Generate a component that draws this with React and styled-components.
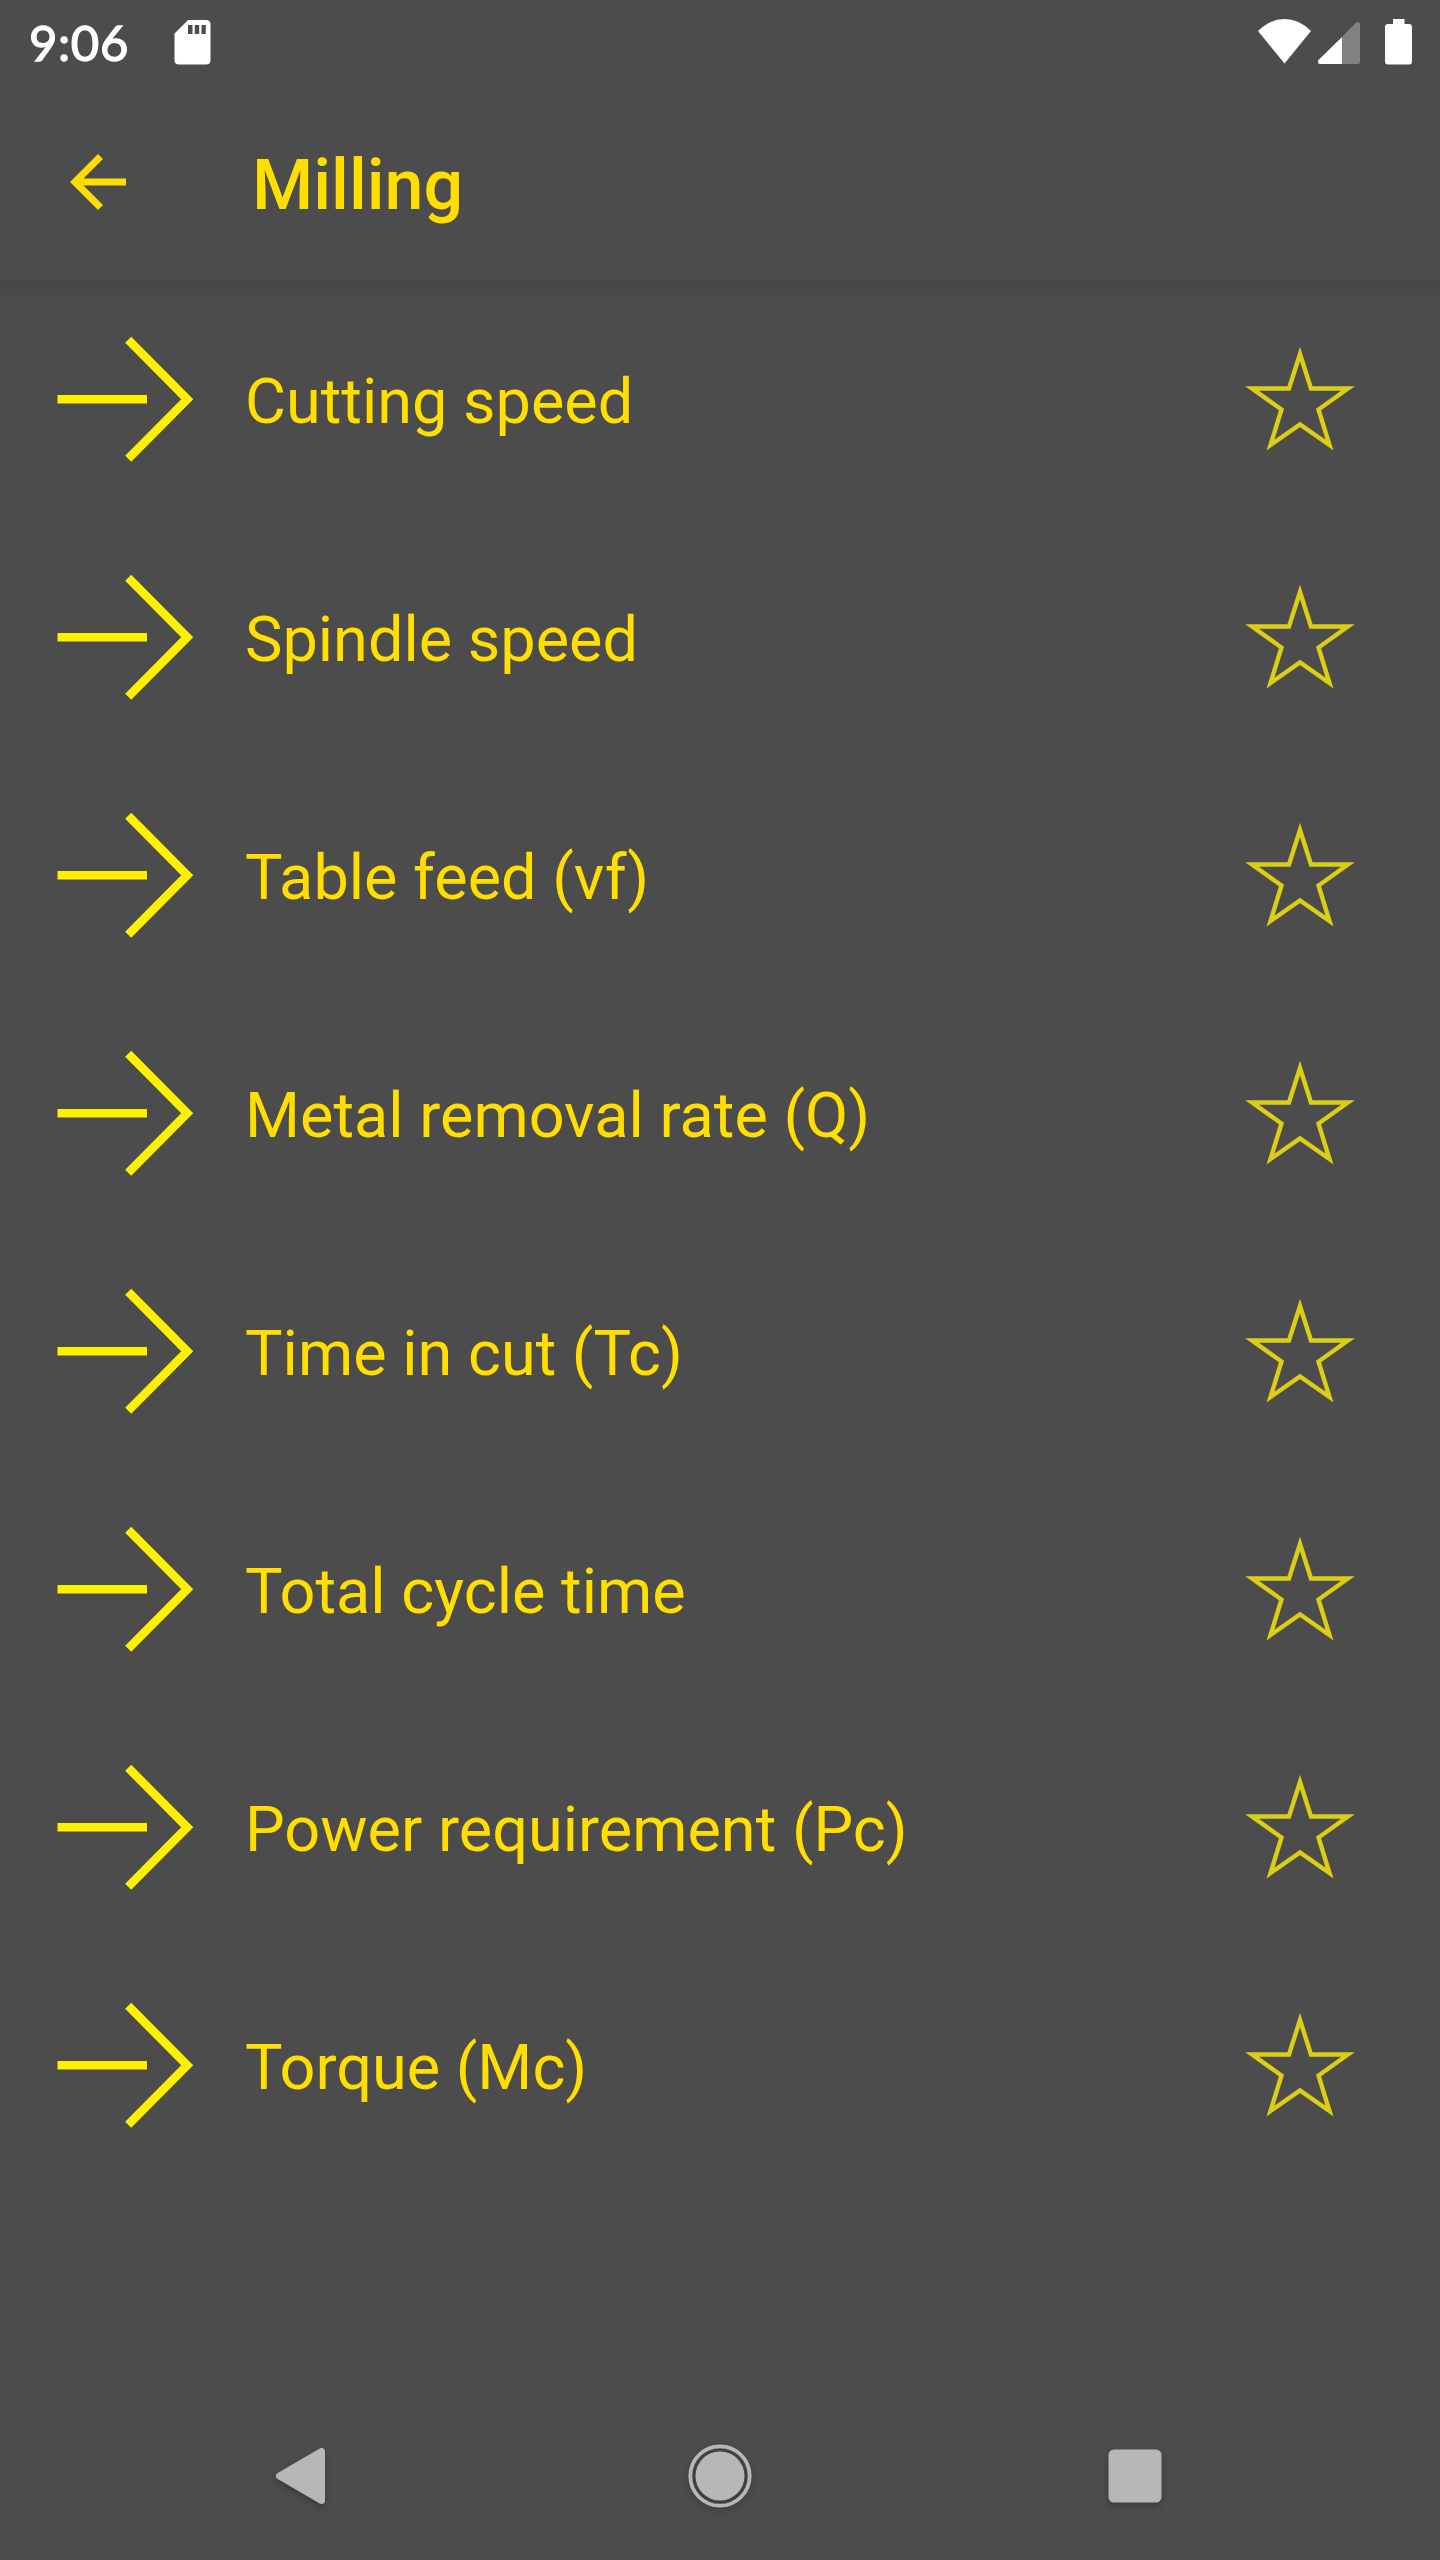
import React from 'react';
import styled, { createGlobalStyle } from 'styled-components';

const GlobalStyle = createGlobalStyle`
  body {
    margin: 0;
    background: #4c4c4c;
  }
`

const Screen = styled.div`
  width: 1440px;
  height: 2560px;
  display: flex;
  flex-direction: column;
  background: #4c4c4c;
  color: #ffde00;
  font-family: Roboto, sans-serif;
  overflow: hidden;
`

const StatusBar = styled.div`
  height: 84px;
  flex: none;
  display: flex;
  justify-content: space-between;
  color: #ffffff;

  svg {
    display: block;
  }
`

const StatusGroup = styled.div`
  display: flex;
`

const Clock = styled.div`
  width: 143px;
  padding-left: 29px;
  font-family: Lato, sans-serif;
  font-size: 49px;
  letter-spacing: 0.6px;
  line-height: 85px;
  -webkit-text-stroke: 1.3px #ffffff;
`

const AppBar = styled.header`
  height: 196px;
  flex: none;
  display: flex;
  align-items: center;
`

const BackButton = styled.button`
  width: 196px;
  height: 196px;
  padding: 0;
  border: none;
  background: none;

  svg {
    display: block;
  }
`

const Title = styled.h1`
  margin: 6px 0 0 56px;
  font-size: 70px;
  font-weight: 500;
  line-height: 82px;
`

const List = styled.ul`
  flex: 1;
  margin: 0;
  padding: 0;
  list-style: none;
  background: linear-gradient(#454545, #4c4c4c) no-repeat;
  background-size: 100% 18px;
`

const Row = styled.li`
  height: 238px;
  display: flex;
  align-items: center;

  svg {
    display: block;
    flex: none;
  }
`

const Label = styled.span`
  flex: 1;
  padding: 6px 0 0 7px;
  font-size: 63px;
  line-height: 74px;
  white-space: nowrap;
`

const NavBar = styled.nav`
  height: 168px;
  flex: none;
  display: flex;
  justify-content: center;

  svg {
    display: block;
    filter: drop-shadow(0 3px 3px rgba(0, 0, 0, 0.25));
  }
`

const NavButton = styled.button`
  width: ${props => props.$width}px;
  height: 168px;
  padding: 0;
  display: flex;
  justify-content: center;
  border: none;
  background: none;
`

const items = [
    'Cutting speed',
    'Spindle speed',
    'Table feed (vf)',
    'Metal removal rate (Q)',
    'Time in cut (Tc)',
    'Total cycle time',
    'Power requirement (Pc)',
    'Torque (Mc)',
];

const SdCard = () => (
    <svg width="42" height="84" viewBox="172 0 42 84">
        <path
            fill="#fff"
            fillRule="evenodd"
            d="M188 20H206Q210.500 20 210.500 24.500V60Q210.500 64.500 206 64.500H179Q174.500 64.500 174.500 60V33.500ZM188 25V34H192.500V25ZM194.800 25V34H199.200V25ZM201.500 25V34H205.800V25Z"
        />
    </svg>
)

const StatusIcons = () => (
    <svg width="190" height="84" viewBox="1250 0 190 84">
        <path fill="#fff" d="M1258 31Q1270 19 1284.500 19T1311 31L1284.500 63.500Z" />
        <path fill="#828282" d="M1342 37L1356 22.800Q1360 20.500 1360 24.500V61.500Q1360 64 1357.500 64H1342Z" />
        <path fill="#fff" d="M1342 37V64H1320Q1318 64 1318 62V60.500Z" />
        <path fill="#fff" d="M1393 19H1404.500V24H1409Q1412 24 1412 27V61.500Q1412 64.500 1409 64.500H1388Q1385 64.500 1385 61.500V27Q1385 24 1388 24H1393Z" />
    </svg>
)

const BackArrow = () => (
    <svg width="196" height="196" viewBox="0 84 196 196">
        <path fill="none" stroke="#ffde00" strokeWidth="7" d="M126 182H75M100.500 156.500L75 182L100.500 207.500" />
    </svg>
)

const RowArrow = () => (
    <svg width="238" height="238" viewBox="0 280 238 238">
        <path fill="none" stroke="#fff000" strokeWidth="8.600" d="M57.500 399.300H147M128.200 339.800L187.200 399.300L128.200 458.800" />
    </svg>
)

const Star = () => (
    <svg width="280" height="238" viewBox="1160 280 280 238">
        <path
            fill="none"
            stroke="#dbce14"
            strokeWidth="4.400"
            strokeMiterlimit="10"
            d="M1300 354L1311 388.500H1348L1318.500 409.500L1329.500 445L1300 424.500L1270.500 445L1281.500 409.500L1252 388.500H1289Z"
        />
    </svg>
)

const App = () => {
    return (
        <>
            <GlobalStyle />
            <Screen>
                <StatusBar>
                    <StatusGroup>
                        <Clock>9:06</Clock>
                        <SdCard />
                    </StatusGroup>
                    <StatusIcons />
                </StatusBar>
                <AppBar>
                    <BackButton aria-label="Back">
                        <BackArrow />
                    </BackButton>
                    <Title>Milling</Title>
                </AppBar>
                <List>
                    {items.map(item => (
                        <Row key={item}>
                            <RowArrow />
                            <Label>{item}</Label>
                            <Star />
                        </Row>
                    ))}
                </List>
                <NavBar>
                    <NavButton $width={416} aria-label="Back">
                        <svg width="120" height="168" viewBox="244 2392 120 168">
                            <path
                                fill="#b7b7b7"
                                stroke="#b7b7b7"
                                strokeWidth="7"
                                strokeLinejoin="round"
                                d="M279.500 2476L321.500 2451.500V2500.500Z"
                            />
                        </svg>
                    </NavButton>
                    <NavButton $width={416} aria-label="Home">
                        <svg width="120" height="168" viewBox="660 2392 120 168">
                            <circle cx="720" cy="2476" r="24.500" fill="#b7b7b7" />
                            <circle cx="720" cy="2476" r="29.700" fill="none" stroke="#b7b7b7" strokeWidth="3.800" />
                        </svg>
                    </NavButton>
                    <NavButton $width={416} aria-label="Overview">
                        <svg width="120" height="168" viewBox="1076 2392 120 168">
                            <rect x="1108.500" y="2449.500" width="53" height="53" rx="5.500" fill="#b7b7b7" />
                        </svg>
                    </NavButton>
                </NavBar>
            </Screen>
        </>
    )
}

export default App;
